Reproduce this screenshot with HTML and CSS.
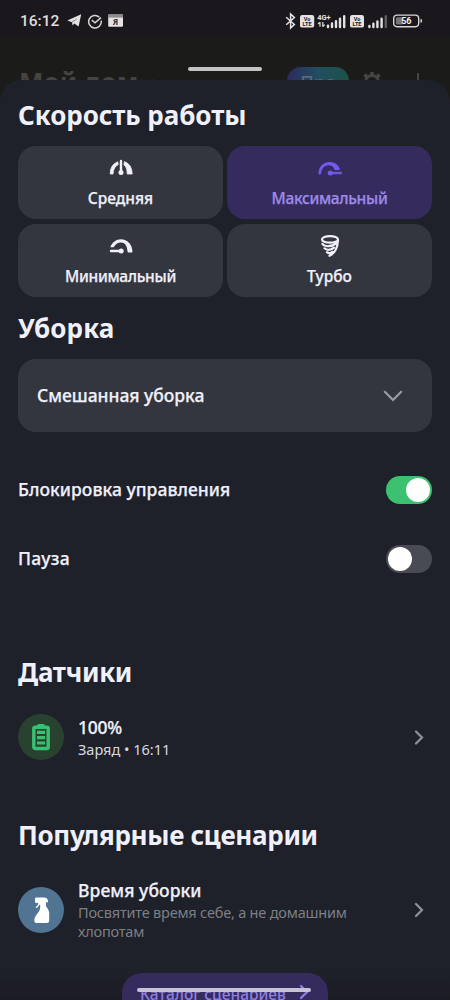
FILE: index.html
```html
<!DOCTYPE html>
<html lang="ru">
<head>
<meta charset="utf-8">
<title>Пылесос</title>
<link rel="stylesheet" href="styles.css">
</head>
<body>
<div class="phone">
  <header class="backdrop">
    <div class="status">
      <span class="clock">16:12</span>
      <svg class="status-left" width="58" height="16" viewBox="0 0 58 16">
        <path d="M0.3 7.6 14.2 1.2 11.6 13.6 7.3 10.6 5.6 12.6 5 9.2Z" fill="#e4e2e3"/>
        <path d="M5 9.2 9.500 6" stroke="#1b181c" stroke-width=".5" fill="none"/>
        <path d="M32.4 4.2A6.3 6.3 0 1 0 34.2 7.6M24.8 7.2 28 9.8 34 4.6" stroke="#d5d4d4" stroke-width="1.5" fill="none"/>
        <rect x="41.2" y="1.4" width="14.8" height="12.4" rx="1" fill="#e4e2e3"/>
        <rect x="41.2" y="1.4" width="14.8" height="3.2" fill="#8d8b8d"/>
        <text x="48.6" y="12.2" class="ya">Я</text>
      </svg>
      <svg class="status-right" width="140" height="18" viewBox="0 0 140 18">
        <path d="M2.200 5.200 10.400 12.400 6.600 16V2L10.400 5.600 2.200 12.800" stroke="#e4e2e3" stroke-width="1.500" fill="none"/>
        <rect x="16" y="3" width="14.200" height="12.600" rx="2.200" fill="#e4e2e3"/>
        <text x="23.100" y="8.800" class="volte">Vo</text>
        <text x="23.100" y="14.300" class="volte">LTE</text>
        <text x="33.200" y="7.800" class="net">4G+</text>
        <path d="M36 10v4.800M34 12.200l2-2M38.800 10v4.800M38.800 14.600l1.800-2" stroke="#e4e2e3" stroke-width="1.200"/>
        <path d="M44 15v-1.400M48 15v-3.600M52 15V9.200M56 15V6.600M60.200 15V4.200" stroke="#e4e2e3" stroke-width="2.400" stroke-linecap="round"/>
        <rect x="66" y="3" width="14" height="12.600" rx="2.200" fill="#e4e2e3"/>
        <text x="73" y="8.800" class="volte">Vo</text>
        <text x="73" y="14.300" class="volte">LTE</text>
        <path d="M85.400 15v-1M89.400 15v-3.200M93.400 15V9.400M97.600 15V6.800" stroke="#e4e2e3" stroke-width="2.400" stroke-linecap="round"/>
        <path d="M101.800 15V4.200" stroke="#5f5d5f" stroke-width="2.400" stroke-linecap="round"/>
        <rect x="109.700" y="3.100" width="25" height="11.600" rx="3.400" stroke="#d8d6d8" stroke-width="1.400" fill="none"/>
        <rect x="112" y="5.200" width="7" height="7.400" rx="1.400" fill="#777577"/>
        <path d="M137.200 7.200v3.400" stroke="#d8d6d8" stroke-width="1.500"/>
        <text x="122.300" y="12.300" class="charge">56</text>
      </svg>
    </div>
    <div class="app-bar">
      <span class="home">Мой дом</span>
      <svg class="home-arrow" width="20" height="10" viewBox="0 0 20 10"><path d="M3 3l6 6 6-6" stroke="#424140" stroke-width="2" fill="none"/></svg>
      <span class="pro">Про</span>
      <svg class="gear" width="22" height="22" viewBox="0 0 22 22" fill="none" stroke="#464544"><circle cx="11" cy="11" r="6.500" stroke-width="2.800"/><path d="M11 4.500V1M11 21v-3.500M4.500 11H1M21 11h-3.500M6.400 6.400 3.500 3.500M18.500 18.500l-2.900-2.900M15.600 6.400l2.900-2.900M3.500 18.500l2.900-2.900" stroke-width="3.600"/></svg>
      <svg class="plus" width="20" height="20" viewBox="0 0 20 20"><path d="M10 1v18M1 10h18" stroke="#464544" stroke-width="2"/></svg>
    </div>
    <div class="grabber"></div>
  </header>

  <main class="sheet">
    <h2 class="title"><span class="t-speed">Скорость работы</span></h2>
    <div class="modes">
      <div class="mode">
        <svg width="26" height="24" viewBox="0 0 26 24" fill="#f0f0fb"><path d="M2.200 19Q2.100 9.800 9.700 6.800L10.300 9.500Q5.400 11.800 5 19Z" stroke="#f0f0fb" stroke-width=".8" stroke-linejoin="round"/><path d="M16.400 6.600Q24 9.300 24.200 19H19.200Q19.200 12 15.900 9.800Z" stroke="#f0f0fb" stroke-width=".8" stroke-linejoin="round"/><path d="M13 6V17" stroke="#f0f0fb" stroke-width="2.400" stroke-linecap="round"/><circle cx="13" cy="17.500" r="2.500"/></svg>
        <span class="m1">Средняя</span>
      </div>
      <div class="mode mode-on">
        <svg width="26" height="24" viewBox="0 0 26 24" fill="#7557f2"><path d="M1.400 18.800C1.600 11.300 6.600 7 12.800 7c4.800 0 9 2.900 10.300 8h-5.400C16.400 11.500 14.600 10.200 12 10.200c-4.500 0-7.500 3.200-7.900 8.600q-1.400 1.300-2.700 0Z"/><path d="M13 18H24" stroke="#6f57d5" stroke-width="2.400" stroke-linecap="round"/><circle cx="13.200" cy="18" r="2.500"/></svg>
        <span class="m2">Максимальный</span>
      </div>
      <div class="mode">
        <svg width="26" height="24" viewBox="0 0 26 24" fill="#f0f0fb"><path d="M2.300 14.300C4 9.300 8.300 6.200 13 6.200c6.300 0 11.200 5.100 11.500 12.200q0 1.100-1 1.200h-2.900q-1-.1-1.100-1.200C19.200 12.600 16.800 9.400 13 9.400c-3.300 0-5.900 2-7.300 4.900Z"/><path d="M3 18H13" stroke="#f0f0fb" stroke-width="2.400" stroke-linecap="round"/><circle cx="13.200" cy="18" r="2.500"/></svg>
        <span class="m3">Минимальный</span>
      </div>
      <div class="mode">
        <svg width="26" height="24" viewBox="0 0 26 24" fill="none" stroke="#f0f0fb" stroke-width="2.200" stroke-linecap="round"><ellipse cx="13" cy="6.400" rx="8" ry="3.300"/><path d="M21 7.500C20.500 14 18 20.500 12.500 22.800M5.400 10.900C8 14.300 14.500 13.800 19 10.500M7.500 15.300c2.400 2.300 6.500 1.800 9.500-.7M10 19.200c1.500 1.300 3.500 1.200 5.500-.4"/></svg>
        <span class="m4">Турбо</span>
      </div>
    </div>

    <h2 class="title title-clean"><span class="t-clean">Уборка</span></h2>
    <div class="select">
      <span class="s-mixed">Смешанная уборка</span>
      <svg width="22" height="14" viewBox="0 0 22 14"><path d="M2.800 2.800 11 11l8.200-8.200" stroke="#9b9da4" stroke-width="2.200" fill="none" stroke-linecap="round"/></svg>
    </div>

    <div class="option"><span class="o-lock">Блокировка управления</span><i class="toggle toggle-on"></i></div>
    <div class="option"><span class="o-pause">Пауза</span><i class="toggle"></i></div>

    <h2 class="title title-sensors"><span class="t-sensors">Датчики</span></h2>
    <div class="item item-sensor">
      <div class="badge badge-green">
        <svg width="20" height="28" viewBox="0 0 20 28"><rect x="6.200" y="1" width="7.600" height="5" rx="1.500" fill="#38c172"/><rect x="2.800" y="4.200" width="14.400" height="21.300" rx="1.600" fill="none" stroke="#38c172" stroke-width="3.400"/><path d="M6 9.400h8M6 14.700h8M6 20h8" stroke="#38c172" stroke-width="3.200"/></svg>
      </div>
      <div class="text"><b class="i-hundred">100%</b><span class="sub i-charge">Заряд • 16:11</span></div>
      <svg class="chev" width="12" height="18" viewBox="0 0 12 18"><path d="M3 3.500l6 6-6 6" stroke="#8d9095" stroke-width="2.300" fill="none" stroke-linecap="round"/></svg>
    </div>

    <h2 class="title title-scen"><span class="t-scen">Популярные сценарии</span></h2>
    <div class="item item-scen">
      <div class="badge badge-blue">
        <svg width="20" height="28" viewBox="0 0 20 28" fill="#fff"><path d="M5.300 1.600H13q3.700 0 4 3.500v1.100h-2.100v3c0 2 3.300 4 3.300 8v7.300q0 2.500-2.500 2.500H5.500Q3.200 27 3.300 24.500c.1-4 3.200-6.500 5-9.700.8-1.800 1-3.600.9-6H7.600V7H5.300Q4 7 4 5.700V3q0-1.400 1.300-1.400Z"/><path d="M8.200 6.500q-.5 3.800-3.200 5.200" stroke="#fff" stroke-width="1.200" fill="none"/></svg>
      </div>
      <div class="text"><b class="i-time">Время уборки</b><span class="sub dim"><span class="i-l1">Посвятите время себе, а не домашним</span><br><span class="i-l2">хлопотам</span></span></div>
      <svg class="chev" width="12" height="18" viewBox="0 0 12 18"><path d="M3 3l6 6-6 6" stroke="#8d9095" stroke-width="2.300" fill="none" stroke-linecap="round"/></svg>
    </div>
    <div class="catalog"><span class="c-text">Каталог сценариев</span><svg width="12" height="18" viewBox="0 0 12 18"><path d="M3 3l6 6-6 6" stroke="#8f7fe0" stroke-width="2.300" fill="none" stroke-linecap="round"/></svg></div>
  </main>
  <div class="nav-pill"></div>
</div>
</body>
</html>
```
FILE: styles.css
```css
* { box-sizing: border-box; }
body { margin: 0; background: #1b1b1a; font-family: "Noto Sans", "Liberation Sans", sans-serif; color: #f0f0fb; }
.phone { position: relative; width: 450px; height: 1000px; overflow: hidden; background: #1b1b1a; }
.backdrop { position: relative; height: 80px; overflow: hidden; }
.status { height: 40px; display: flex; align-items: center; padding: 2px 26px 0 20px; background: linear-gradient(#1b181d 85%, #1b1b1a); }
.clock { font: 500 15.500px/20px Roboto, sans-serif; color: #dedcde; width: 47px; white-space: nowrap; }
.status-left { display: block; }
.status-right { display: block; margin-left: auto; }
.ya { font: bold 8px "Noto Sans", sans-serif; fill: #333; text-anchor: middle; }
.volte { font: bold 5.600px Roboto, sans-serif; fill: #252327; text-anchor: middle; }
.net { font: bold 7.500px Roboto, sans-serif; fill: #e4e2e3; }
.charge { font: bold 9px Roboto, sans-serif; fill: #eee; text-anchor: middle; }
.app-bar { display: flex; align-items: flex-start; padding: 27px 22px 0 19px; }
.home { font-weight: 700; font-size: 26px; line-height: 30px; color: #454443; width: 119px; white-space: nowrap; }
.home-arrow { margin-top: 10px; }
.pro { margin-left: 129px; width: 62px; height: 28px; border-radius: 14px; background: linear-gradient(90deg, #2b2a5e, #214e62 50%, #1d5246); color: #59677b; font-size: 18px; font-weight: 500; line-height: 30px; text-align: center; }
.gear { margin: 4px 0 0 12px; }
.plus { margin: 5px 0 0 25px; }
.grabber { position: absolute; left: 188px; top: 67px; width: 74px; height: 4px; border-radius: 2px; background: #c4c4c4; }
.sheet { height: 920px; padding: 18px 18px 0; background: linear-gradient(#1e2129 97%, #1b1b24); border-radius: 22px 22px 0 0; overflow: hidden; }
.title { margin: 0; font-size: 26px; line-height: 34px; font-weight: 700; white-space: nowrap; }
.t-speed { letter-spacing: -.07px; }
.t-clean { letter-spacing: .15px; }
.t-sensors { letter-spacing: -.3px; }
.t-scen { letter-spacing: -.32px; }
.modes { margin-top: 14px; display: grid; grid-template-columns: 205px 205px; grid-auto-rows: 73px; gap: 5px 4px; }
.mode { border-radius: 18px; background: #33363e; display: flex; flex-direction: column; align-items: center; padding-top: 9px; font-size: 15.500px; font-weight: 500; line-height: 22px; gap: 8px; }
.mode span, .select span, .option span, .text b { white-space: nowrap; -webkit-text-stroke: .25px currentColor; }
.m2, .m3 { letter-spacing: -.32px; }
.mode-on { background: #352b5d; color: #9d8ae8; }
.title-clean { margin-top: 14px; }
.select { margin-top: 14px; height: 73px; border-radius: 18px; background: #33363e; padding: 0 28px 0 19px; display: flex; align-items: center; justify-content: space-between; font-size: 17.500px; font-weight: 500; }
.select span { margin-top: -2px; letter-spacing: -.03px; }
.option span { margin-top: -1px; }
.o-lock { letter-spacing: .04px; }
.o-pause { letter-spacing: .3px; }
.option { display: flex; justify-content: space-between; align-items: center; height: 69px; font-size: 17.500px; font-weight: 500; }
.select + .option { margin-top: 23px; }
.toggle { width: 46px; height: 28px; border-radius: 14px; background: #484a54; padding: 2px; display: flex; }
.toggle::after { content: ""; width: 24px; height: 24px; border-radius: 50%; background: #fff; }
.toggle-on { background: #3bc170; justify-content: flex-end; }
.title-sensors { margin-top: 62px; }
.item { display: flex; align-items: center; }
.item-sensor { margin-top: 25px; height: 46px; }
.badge { width: 46px; height: 46px; border-radius: 50%; display: flex; align-items: center; justify-content: center; flex: none; }
.badge-green { background: #28422f; }
.badge-blue { background: #507491; }
.text { margin-left: 14px; display: flex; flex-direction: column; white-space: nowrap; }
.text b { font-weight: 500; font-size: 17.500px; line-height: 24px; }
.item-sensor .text { margin-top: 1px; }
.item-sensor b { margin-top: -1px; margin-bottom: 1px; }
.i-hundred { letter-spacing: -.25px; }
.i-time { letter-spacing: .08px; }
.sub { font-size: 14.500px; line-height: 18.500px; color: #d7d8e2; }
.dim { color: #7c7f86; margin-top: 1px; }
.i-l1, .i-l2 { letter-spacing: -.2px; }
.chev { margin-left: auto; margin-right: 7px; }
.title-scen { margin-top: 58px; }
.item-scen { margin-top: 26px; height: 64px; }
.item-scen .text { margin-top: -2px; }
.catalog { margin: 31px auto 0; width: 206px; height: 46px; border-radius: 20px; background: #352b5d; color: #8f7fe0; display: flex; justify-content: center; align-items: flex-start; gap: 12px; padding-top: 10px; font-size: 15.500px; font-weight: 500; line-height: 22px; white-space: nowrap; }
.nav-pill { position: absolute; left: 137px; top: 988px; width: 174px; height: 4px; border-radius: 2px; background: #c8c2d8; }
```
